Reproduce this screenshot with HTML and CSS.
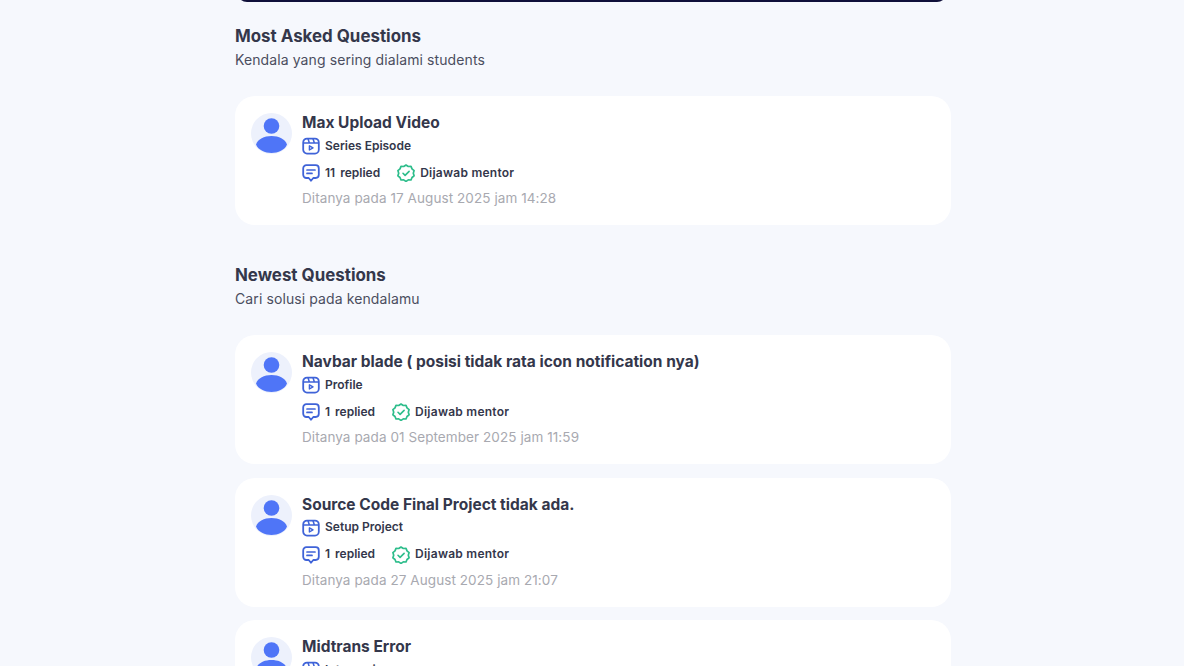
FILE: index.html
```html
<!DOCTYPE html>
<html lang="id">
<head>
  <meta charset="UTF-8" />
  <meta name="viewport" content="width=device-width, initial-scale=1" />
  <title>Forum Diskusi</title>
  <link rel="stylesheet" href="styles.css">
</head>
<body>
  <svg class="icon-defs" width="0" height="0" aria-hidden="true">
    <symbol id="avatar" viewBox="0 0 41 41">
      <circle cx="20.5" cy="20.5" r="20.5" fill="#edf1fc"/>
      <circle cx="20.5" cy="13" r="7.8" fill="#4f75f7"/>
      <path d="M5 31.5C7 26 13 23 20.5 23S34 26 36 31.5C34 37 27 40 20.5 40S7 37 5 31.5z" fill="#4f75f7"/>
    </symbol>
    <symbol id="video" viewBox="0 0 18 18">
      <rect x="1.2" y="1.6" width="15.6" height="15" rx="3.8" fill="none" stroke="#3f63d8" stroke-width="1.8"/>
      <path d="M1.5 6h15M6 1.8 7.4 6M11 1.8 12.4 6" fill="none" stroke="#3f63d8" stroke-width="1.5"/>
      <path d="M7.4 8.8v4.2l3.6-2.1z" fill="none" stroke="#3f63d8" stroke-width="1.4" stroke-linejoin="round"/>
    </symbol>
    <symbol id="chat" viewBox="0 0 18 18">
      <path d="M4.4 1.2h9.2a3.2 3.2 0 0 1 3.2 3.2v6.4a3.2 3.2 0 0 1-3.2 3.2h-2.3L9 16.8l-2.3-2.8H4.4a3.2 3.2 0 0 1-3.2-3.2V4.4a3.2 3.2 0 0 1 3.2-3.2z" fill="none" stroke="#3f63d8" stroke-width="1.8" stroke-linejoin="round"/>
      <path d="M5 6h8M5 9.4h5" fill="none" stroke="#3f63d8" stroke-width="1.7" stroke-linecap="round"/>
    </symbol>
    <symbol id="badge" viewBox="0 0 18 18">
      <path d="M9 1l2.3 1.5 2.7-.1 1 2.5 2.1 1.7-.8 2.6.8 2.6-2.1 1.7-1 2.5-2.7-.1L9 17.4l-2.3-1.5-2.7.1-1-2.5-2.1-1.7.8-2.6-.8-2.6 2.1-1.7 1-2.5 2.7.1z" fill="none" stroke="#2dbd8b" stroke-width="1.7" stroke-linejoin="round"/>
      <path d="M6 9.3l2.1 2.1 4-4" fill="none" stroke="#2dbd8b" stroke-width="1.6" stroke-linecap="round" stroke-linejoin="round"/>
    </symbol>
  </svg>

  <main class="container">
    <div class="top-banner"></div>

    <section class="section">
      <h2 class="section-title">Most Asked Questions</h2>
      <p class="section-sub">Kendala yang sering dialami students</p>
      <div class="question-list">
        <article class="question-card">
          <svg class="avatar"><use href="#avatar"/></svg>
          <div class="question-body">
            <h3 class="question-title">Max Upload Video</h3>
            <div class="meta-row meta-lesson"><svg class="icon"><use href="#video"/></svg><span>Series Episode</span></div>
            <div class="meta-row meta-status">
              <span class="meta-item"><svg class="icon"><use href="#chat"/></svg><span class="replied">11 replied</span></span>
              <span class="meta-item"><svg class="icon"><use href="#badge"/></svg><span class="answered">Dijawab mentor</span></span>
            </div>
            <p class="question-date">Ditanya pada 17 August 2025 jam 14:28</p>
          </div>
        </article>
      </div>
    </section>

    <section class="section">
      <h2 class="section-title">Newest Questions</h2>
      <p class="section-sub">Cari solusi pada kendalamu</p>
      <div class="question-list">
        <article class="question-card">
          <svg class="avatar"><use href="#avatar"/></svg>
          <div class="question-body">
            <h3 class="question-title">Navbar blade ( posisi tidak rata icon notification nya)</h3>
            <div class="meta-row meta-lesson"><svg class="icon"><use href="#video"/></svg><span>Profile</span></div>
            <div class="meta-row meta-status">
              <span class="meta-item"><svg class="icon"><use href="#chat"/></svg><span class="replied">1 replied</span></span>
              <span class="meta-item"><svg class="icon"><use href="#badge"/></svg><span class="answered">Dijawab mentor</span></span>
            </div>
            <p class="question-date">Ditanya pada 01 September 2025 jam 11:59</p>
          </div>
        </article>
        <article class="question-card">
          <svg class="avatar"><use href="#avatar"/></svg>
          <div class="question-body">
            <h3 class="question-title">Source Code Final Project tidak ada.</h3>
            <div class="meta-row meta-lesson"><svg class="icon"><use href="#video"/></svg><span>Setup Project</span></div>
            <div class="meta-row meta-status">
              <span class="meta-item"><svg class="icon"><use href="#chat"/></svg><span class="replied">1 replied</span></span>
              <span class="meta-item"><svg class="icon"><use href="#badge"/></svg><span class="answered">Dijawab mentor</span></span>
            </div>
            <p class="question-date">Ditanya pada 27 August 2025 jam 21:07</p>
          </div>
        </article>
        <article class="question-card">
          <svg class="avatar"><use href="#avatar"/></svg>
          <div class="question-body">
            <h3 class="question-title">Midtrans Error</h3>
            <div class="meta-row meta-lesson"><svg class="icon"><use href="#video"/></svg><span>Integrasi</span></div>
          </div>
        </article>
      </div>
    </section>
  </main>
</body>
</html>
```

FILE: styles.css
```css
html, body {
  height: 666px;
  overflow: hidden;
}
body {
  margin: 0;
  background-color: #f6f8fd;
  color: #34374b;
  font-family: "Inter", "Liberation Sans", sans-serif;
}
.icon-defs {
  display: block;
  height: 0;
}
.container {
  width: 716px;
  margin-left: 235px;
}
.top-banner {
  height: 40px;
  margin: -38px 4px 0 2px;
  background-color: #10103a;
  border-radius: 0 0 10px 10px;
}
.section {
  margin-bottom: 39px;
}
.section-title {
  margin: 23px 0 0;
  font-size: 16.9px;
  line-height: 22px;
  font-weight: 700;
}
.section + .section .section-title {
  margin-top: 0;
}
.section-sub {
  margin: 2.5px 0 0;
  font-size: 14px;
  line-height: 20px;
  letter-spacing: 0.1px;
  color: #4b4e60;
}
.question-list {
  display: flex;
  flex-direction: column;
  gap: 13.5px;
  margin-top: 26.5px;
}
.question-card {
  display: flex;
  gap: 10px;
  height: 129px;
  box-sizing: border-box;
  padding: 17px 16px;
  background-color: #ffffff;
  border-radius: 20px;
}
.avatar {
  flex: none;
  width: 41px;
  height: 41px;
}
.question-title {
  margin: 0;
  font-size: 15.5px;
  line-height: 20px;
  font-weight: 700;
}
.meta-row {
  display: flex;
  align-items: center;
  font-size: 12px;
  font-weight: 600;
}
.meta-lesson {
  gap: 5px;
  margin-top: 3px;
}
.meta-status {
  gap: 17px;
  margin-top: 9px;
}
.meta-item {
  display: flex;
  align-items: center;
  gap: 5px;
}
.replied {
  word-spacing: 2px;
}
.answered {
  letter-spacing: 0.25px;
}
.icon {
  flex: none;
  width: 18px;
  height: 18px;
  transform: translateY(1px);
}
.question-date {
  margin: 7px 0 0;
  font-size: 13.5px;
  line-height: 20px;
  letter-spacing: 0.08px;
  color: #a8a9b0;
}
```
